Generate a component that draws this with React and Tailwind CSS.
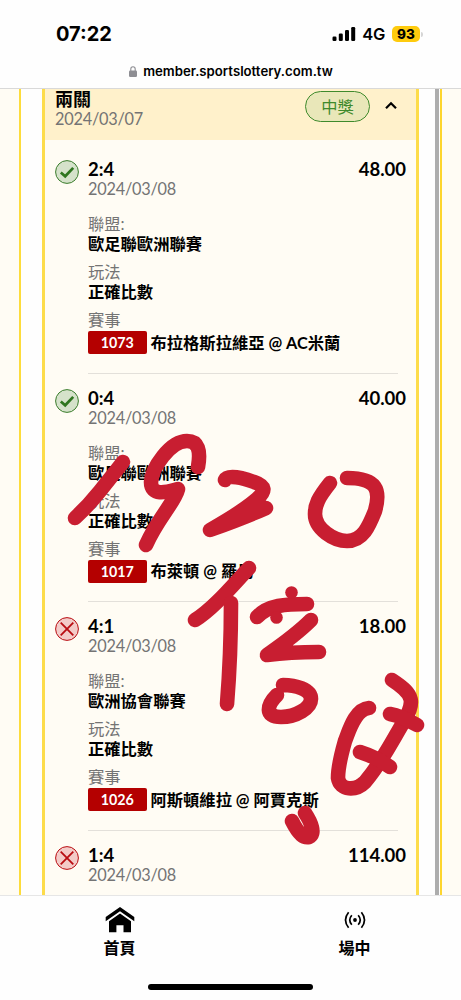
import React from 'react';

const BETS = [
  { won: true, score: '2:4', odds: '48.00', league: '歐足聯歐洲聯賽', no: '1073', match: '布拉格斯拉維亞 @ AC米蘭' },
  { won: true, score: '0:4', odds: '40.00', league: '歐足聯歐洲聯賽', no: '1017', match: '布萊頓 @ 羅馬' },
  { won: false, score: '4:1', odds: '18.00', league: '歐洲協會聯賽', no: '1026', match: '阿斯頓維拉 @ 阿賈克斯' },
  { won: false, score: '1:4', odds: '114.00' },
];

const STROKES = [
  // 1920
  'M123 462 Q112 476 100 491 Q88 506 75 518',
  'M198 467 C201 450 198 441 187 441 C170 441 152 468 151 482 C151 498 170 491 178 489 C175 502 158 518 146 545',
  'M225 480 C228 474 243 478 254 482 C266 486 266 491 257 499 Q242 512 210 530 Q246 517 266 508',
  'M330 483 C318 498 315 505 315 514 C315 529 334 541 347 541 C363 541 369 526 375 511 C381 490 377 478 347 478',
  'M249 568 C232 586 213 609 195 620',
  'M231 603 Q231 655 227 704',
  'M257 617 C268 605 286 604 307 604',
  'M311 620 C297 634 280 646 267 655 Q290 652 319 652',
  'M277 695 C267 705 264 717 281 717 C296 717 311 708 311 699 C311 689 295 685 283 685',
  'M369 708 C355 709 349 731 345 741 C341 755 338 767 338 778 C340 791 356 791 365 782 C382 762 391 743 403 723 C415 702 415 695 392 680',
  'M390 714 Q401 716 417 725',
  'M360 752 Q376 757 390 767',
  'M292 821 C299 835 304 838 309 837 C316 834 311 822 305 813',
];

const StatusIcon = ({ won }) => (
  <svg viewBox="0 0 24 24" className="w-6 h-6" fill="none">
    <circle cx="12" cy="12" r="11.4" fill={won ? '#d5e2ca' : '#f3cbc8'} stroke={won ? '#3a7d2c' : '#b90d12'} />
    {won ? (
      <path d="M5.8 12.4 10.2 16.3 18.2 7.9" stroke="#2f761f" strokeWidth="2.7" />
    ) : (
      <path d="M5.7 5.7 18.3 18.3 M18.3 5.7 5.7 18.3" stroke="#b90d12" strokeWidth="1.8" />
    )}
  </svg>
);

const Field = ({ label, children }) => (
  <div className="mb-2">
    <div className="text-[#747474]">{label}</div>
    <div className="font-bold text-black">{children}</div>
  </div>
);

const Bet = ({ bet }) => (
  <div className="flex h-[228.5px] shrink-0 pl-[10px] pr-[10px] pt-[14px]">
    <div className="w-[33px] shrink-0 pt-[1px]">
      <StatusIcon won={bet.won} />
    </div>
    <div className="flex-1 flex flex-col">
      <div className="flex justify-between text-[18.5px] font-bold text-black">
        <span>{bet.score}</span>
        <span>{bet.odds}</span>
      </div>
      <div className="tracking-[-0.22px] text-[#747474] mb-[15px]">2024/03/08</div>
      {bet.league && (
        <>
          <Field label="聯盟:">{bet.league}</Field>
          <Field label="玩法">正確比數</Field>
          <div className="text-[#747474]">賽事</div>
          <div className="flex items-center gap-[4px] mt-[1px] font-bold text-black whitespace-nowrap">
            <span className="w-[58.5px] h-[23px] rounded-[2px] bg-[#b40000] text-white text-[14.3px] leading-[23px] text-center">{bet.no}</span>
            <span>{bet.match}</span>
          </div>
          <div className="mt-auto mr-[8px] h-px bg-[#e3e0da]" />
        </>
      )}
    </div>
  </div>
);

const StatusBar = () => (
  <div className="h-[55px] flex items-end justify-between pl-[56px] pr-[38px] font-[Inter,sans-serif] text-black">
    <span className="text-[20px] leading-[24px] font-bold pb-[9px]">07:22</span>
    <div className="flex items-center h-6 mb-[9px]">
      <svg width="24" height="16" viewBox="0 0 24 16">
        <rect x="0.5" y="10.5" width="4" height="4.5" rx="1.2" />
        <rect x="6.8" y="7.5" width="4" height="7.5" rx="1.2" />
        <rect x="13" y="4" width="4" height="11" rx="1.2" />
        <rect x="19.2" y="1" width="4" height="14" rx="1.2" />
      </svg>
      <span className="text-[16.5px] font-semibold tracking-[-0.3px] ml-[6px]">4G</span>
      <span className="ml-[7px] w-[28px] h-4 rounded-[5px] bg-[#fecb0e] text-[13.5px] leading-4 font-extrabold text-center">93</span>
      <span className="ml-[1px] w-[2px] h-[5px] rounded-r-full bg-[#d5d5d5]" />
    </div>
  </div>
);

const Tab = ({ icon, label, className }) => (
  <div className={`flex-1 flex flex-col items-center text-black ${className}`}>
    <div className="h-[29px] flex items-center">{icon}</div>
    <span className="mt-[3px] text-[16px] leading-[22px] font-bold">{label}</span>
  </div>
);

const HomeIcon = () => (
  <svg width="30" height="28" viewBox="0 0 30 28">
    <path d="M15 1 29.3 11V15.2L15 5.2 0.7 15.2V11Z" />
    <path d="M15 7.6 26 15.2V26.2H18.5V19.2H11.4V26.2H4V15.2Z" />
  </svg>
);

const LiveIcon = () => (
  <svg width="22" height="18" viewBox="0 0 22 18" fill="none" stroke="#000" strokeWidth="1.7">
    <circle cx="11" cy="9" r="1.9" fill="#000" stroke="none" />
    <path d="M4.6 1.2Q-1.6 9 4.6 16.8M17.4 1.2Q23.6 9 17.4 16.8M7.8 4.3Q3.7 9 7.8 13.7M14.2 4.3Q18.3 9 14.2 13.7" />
  </svg>
);

export default function App() {
  return (
    <div className="relative w-[461px] h-[1000px] overflow-hidden flex flex-col bg-[#fefefe] font-[Lato,'Noto_Sans_CJK_TC',sans-serif] text-[16.3px] leading-[20px]">
      <header className="h-[89px] shrink-0 border-b border-[#d9d9d9]">
        <StatusBar />
        <div className="flex items-center justify-center h-[32px] gap-[6px] pl-[1px] font-[Inter,sans-serif] text-[13.2px] font-semibold text-black">
          <svg width="8" height="11" viewBox="0 0 8 11">
            <rect x="0" y="4.5" width="8" height="6.5" rx="1.2" fill="#8e8e93" />
            <path d="M1.8 5V3a2.2 2.2 0 0 1 4.4 0v2" fill="none" stroke="#8e8e93" strokeWidth="1.1" />
          </svg>
          <span>member.sportslottery.com.tw</span>
        </div>
      </header>

      <main className="h-[806px] shrink-0 flex overflow-hidden">
        <div className="w-[21px] shrink-0 bg-[#fffcf4] border-r-2 border-[#fddc3b]" />
        <div className="w-[21px] shrink-0" />
        <section className="w-[377px] shrink-0 flex flex-col bg-[#fffcf4] border-x-[3px] border-[#fddc4a] overflow-hidden">
          <div className="h-[51px] shrink-0 bg-[#fff1cb] flex pl-[10px] pr-[19px]">
            <div className="flex-1">
              <div className="text-[18px] font-bold text-black">兩關</div>
              <div className="tracking-[-0.22px] text-[#747474]">2024/03/07</div>
            </div>
            <div className="mt-[2px] w-[65px] h-[31px] rounded-full border border-[#3f8a2c] bg-[#e9e7b9] text-[#3f8a2c] text-center leading-[29px]">中獎</div>
            <svg width="12" height="9" viewBox="0 0 12 9" className="ml-[15px] mt-[12px]" fill="none" stroke="#000" strokeWidth="2.2">
              <path d="M1 7.2 6 2.2 11 7.2" />
            </svg>
          </div>
          <div className="pt-[5px] flex flex-col">
            {BETS.map((bet) => <Bet key={bet.score} bet={bet} />)}
          </div>
        </section>
        <div className="flex-1" />
        <div className="w-1 shrink-0 bg-[#adadad]" />
        <div className="w-[21px] shrink-0 ml-[1px] bg-[#fffcf4] border-l-2 border-[#fdd52e]" />
      </main>

      <footer className="flex-1 flex flex-col border-t border-[#e6e6e6] bg-[#fefefe]">
        <div className="flex h-[88px] pt-[9px]">
          <Tab icon={<HomeIcon />} label="首頁" className="pl-[13px]" />
          <Tab icon={<LiveIcon />} label="場中" className="pl-[22px]" />
        </div>
        <div className="w-[165px] h-[6px] rounded-full bg-black mx-auto" />
      </footer>

      {/* finger-drawn markup on top of the page */}
      <svg
        className="absolute inset-0 pointer-events-none blur-[0.6px]"
        width="461"
        height="1000"
        viewBox="0 0 461 1000"
        fill="none"
        stroke="#c81e31"
        strokeWidth="14.6"
        strokeLinecap="round"
        strokeLinejoin="round"
      >
        {STROKES.map((d) => <path key={d} d={d} />)}
        <circle cx="291.5" cy="592.5" r="6.3" fill="#c81e31" stroke="none" />
        <circle cx="276.5" cy="617.5" r="6.3" fill="#c81e31" stroke="none" />
      </svg>
    </div>
  );
}
